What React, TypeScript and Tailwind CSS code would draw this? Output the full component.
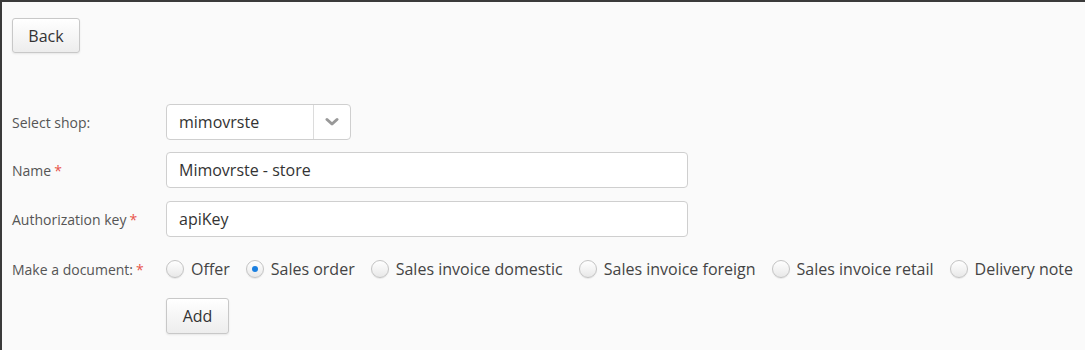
import { useState } from 'react'

const docTypes = [
  'Offer',
  'Sales order',
  'Sales invoice domestic',
  'Sales invoice foreign',
  'Sales invoice retail',
  'Delivery note',
]

function Required() {
  return <span className="ml-[3px] text-[#e8534a]">*</span>
}

export default function App() {
  const [doc, setDoc] = useState('Sales order')
  const [name, setName] = useState('Mimovrste - store')
  const [apiKey, setApiKey] = useState('apiKey')

  return (
    <div
      className="h-[350px] w-full overflow-hidden border-l-2 border-t-2 border-[#3a3a3a] bg-[#fafafa] pl-[10px] pt-[16px] text-[#444]"
      style={{ fontFamily: '"Open Sans", "Noto Sans", sans-serif' }}
    >
      <button className="h-[35px] w-[68px] rounded-[3px] border border-[#c8c8c8] bg-gradient-to-b from-white to-[#ededed] text-[16px] text-[#333] shadow-[0_1px_2px_rgba(0,0,0,0.08)]">
        Back
      </button>

      <div className="mt-[51px] flex flex-col">
        <div className="flex h-[36px] items-center">
          <label className="w-[154px] text-[14px] text-[#555]">Select shop:</label>
          <div className="flex h-[36px] w-[185px] items-stretch rounded-[4px] border border-[#cfcfcf] bg-white">
            <div className="flex flex-1 items-center pl-[12px] text-[16px] text-[#333]">mimovrste</div>
            <div className="flex w-[37px] items-center justify-center border-l border-[#dcdcdc]">
              <svg width="14" height="10" viewBox="0 0 14 10">
                <path d="M2 2.5 L7 7 L12 2.5" fill="none" stroke="#999" strokeWidth="3" strokeLinecap="round" strokeLinejoin="round" />
              </svg>
            </div>
          </div>
        </div>

        <div className="mt-[12px] flex h-[36px] items-center">
          <label className="w-[154px] text-[14px] text-[#555]">
            Name
            <Required />
          </label>
          <input
            value={name}
            onChange={(e) => setName(e.target.value)}
            className="h-[36px] w-[522px] rounded-[4px] border border-[#cfcfcf] bg-white px-[12px] text-[16px] text-[#333] outline-none"
          />
        </div>

        <div className="mt-[13px] flex h-[36px] items-center">
          <label className="w-[154px] text-[14px] text-[#555]">
            Authorization key
            <Required />
          </label>
          <input
            value={apiKey}
            onChange={(e) => setApiKey(e.target.value)}
            className="h-[36px] w-[522px] rounded-[4px] border border-[#cfcfcf] bg-white px-[12px] text-[16px] text-[#333] outline-none"
          />
        </div>

        <div className="mt-[22px] flex h-[20px] items-center">
          <label className="w-[154px] text-[14px] text-[#555]">
            Make a document:
            <Required />
          </label>
          <div className="flex items-center gap-[16px]">
            {docTypes.map((d) => (
              <label key={d} className="flex cursor-pointer items-center gap-[7px] text-[16px] text-[#444]" onClick={() => setDoc(d)}>
                <span className="flex h-[18px] w-[18px] items-center justify-center rounded-full border border-[#c4c4c4] bg-gradient-to-b from-white to-[#e8e8e8] shadow-[0_1px_1px_rgba(0,0,0,0.08)]">
                  {doc === d && <span className="h-[6px] w-[6px] rounded-full bg-[#1a7fe0]" />}
                </span>
                {d}
              </label>
            ))}
          </div>
        </div>

        <div className="mt-[19px] pl-[154px]">
          <button className="h-[36px] w-[63px] rounded-[3px] border border-[#c8c8c8] bg-gradient-to-b from-white to-[#ededed] text-[16px] text-[#333] shadow-[0_1px_2px_rgba(0,0,0,0.08)]">
            Add
          </button>
        </div>
      </div>
    </div>
  )
}
